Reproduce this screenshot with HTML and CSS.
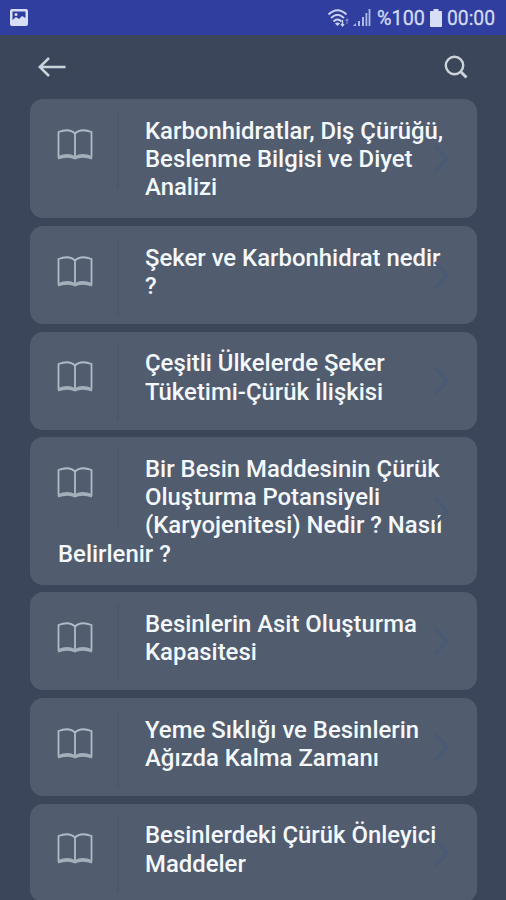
FILE: index.html
```html
<!DOCTYPE html>
<html lang="tr">
<head>
<meta charset="utf-8">
<title>Konular</title>
<link rel="stylesheet" href="styles.css">
</head>
<body>
<svg class="defs" width="0" height="0">
  <symbol id="book" viewBox="0 0 36 33">
    <path d="M18 5.500C14 1.500 8 1.500 1.500 4V30M18 5.500C22 1.500 28 1.500 34.500 4V30M18 5.500V29" fill="none" stroke="#b0bac6" stroke-width="1.800"/>
    <path d="M1 28Q11 24 18 28Q25 24 35 28V31.500Q25 28 18 31.500Q11 28 1 31.500Z" fill="#a3aebb"/>
  </symbol>
  <symbol id="chevron" viewBox="0 0 18 30">
    <path d="M3 2L15.500 15L3 28" fill="none" stroke="#495a75" stroke-width="3"/>
  </symbol>
</svg>
<header class="status">
  <svg class="picture" width="18" height="17" viewBox="0 0 18 17"><path fill-rule="evenodd" fill="#d8def8" d="M2 0H16Q18 0 18 2V15Q18 17 16 17H2Q0 17 0 15V2Q0 0 2 0ZM2.500 2.500V11L6 8L9 10L12 7L15.500 9V2.500Z"/><circle cx="6" cy="5.500" r="1.500" fill="#d8def8"/></svg>
  <div class="status-right">
    <svg class="wifi" width="23" height="18" viewBox="0 0 23 18" fill="none" stroke="#cbd3f5" stroke-width="1.900"><path d="M0.500 5.500Q9.500 -3 18.500 5.500M3 9Q9.500 2.500 16 9M5.500 12.500Q9.500 8.500 13.500 12.500"/><path d="M7 14.500Q9.500 12.500 12 14.500L9.500 17Z" fill="#cbd3f5" stroke="none"/><path d="M14.500 11V17M13 15L14.500 17L16 15" stroke-width="1.300"/><path d="M19 10V15M17.500 11.500L19 10L20.500 11.500" stroke="#7782cb" stroke-width="1.200"/></svg>
    <svg class="signal" width="18" height="18" viewBox="0 0 18 18" fill="#aeb9eb"><path d="M0 17L3 14V17ZM5 12H7V17H5ZM9 8H11V17H9ZM12.500 4H14.300V17H12.500ZM15.600 0H17.400V17H15.600Z"/></svg>
    <svg class="percent-box" width="53" height="24"><text x="0" y="19" textLength="48" lengthAdjust="spacingAndGlyphs">%100</text></svg>
    <svg class="battery" width="12" height="18" viewBox="0 0 12 18"><path fill="#d8def8" d="M3.500 0H8.500V2H11Q12 2 12 3V17Q12 18 11 18H1Q0 18 0 17V3Q0 2 1 2H3.500Z"/></svg>
    <svg class="clock" width="49" height="24"><text x="0" y="19" textLength="48" lengthAdjust="spacingAndGlyphs">00:00</text></svg>
  </div>
</header>
<nav class="toolbar">
  <svg width="28" height="20" viewBox="0 0 28 20" fill="none" stroke="#ccd5dc" stroke-width="2.500"><path d="M11 1L1.800 10L11 19M2 10H27.500"/></svg>
  <svg width="24" height="24" viewBox="0 0 24 24" fill="none" stroke="#ccd3da" stroke-width="2.400"><circle cx="10.500" cy="10.500" r="8.700"/><path d="M16.500 16.500L22.500 22.500" stroke-width="3"/></svg>
</nav>
<main class="list">
  <article class="card"><div class="media"><svg class="book"><use href="#book"/></svg></div><h2 class="title">Karbonhidratlar, Diş Çürüğü,<br>Beslenme Bilgisi ve Diyet<br>Analizi</h2><svg class="chevron"><use href="#chevron"/></svg></article>
  <article class="card"><div class="media"><svg class="book"><use href="#book"/></svg></div><h2 class="title">Şeker ve Karbonhidrat nedir<br>?</h2><svg class="chevron"><use href="#chevron"/></svg></article>
  <article class="card"><div class="media"><svg class="book"><use href="#book"/></svg></div><h2 class="title">Çeşitli Ülkelerde Şeker<br>Tüketimi-Çürük İlişkisi</h2><svg class="chevron"><use href="#chevron"/></svg></article>
  <article class="card"><div class="media"><svg class="book"><use href="#book"/></svg></div><h2 class="title">Bir Besin Maddesinin Çürük<br>Oluşturma Potansiyeli<br>(Karyojenitesi) Nedir ? Nasıl<br>Belirlenir ?</h2><svg class="chevron"><use href="#chevron"/></svg></article>
  <article class="card"><div class="media"><svg class="book"><use href="#book"/></svg></div><h2 class="title">Besinlerin Asit Oluşturma<br>Kapasitesi</h2><svg class="chevron"><use href="#chevron"/></svg></article>
  <article class="card"><div class="media"><svg class="book"><use href="#book"/></svg></div><h2 class="title">Yeme Sıklığı ve Besinlerin<br>Ağızda Kalma Zamanı</h2><svg class="chevron"><use href="#chevron"/></svg></article>
  <article class="card"><div class="media"><svg class="book"><use href="#book"/></svg></div><h2 class="title">Besinlerdeki Çürük Önleyici<br>Maddeler</h2><svg class="chevron"><use href="#chevron"/></svg></article>
</main>
</body>
</html>
```
FILE: styles.css
```css
* { box-sizing: border-box; }
body {
  margin: 0;
  height: 900px;
  overflow: hidden;
  background: #3b465a;
  font-family: Roboto, "Liberation Sans", sans-serif;
}
svg { display: block; flex: none; overflow: visible; }
.defs { position: absolute; }
.status {
  height: 35px;
  display: flex;
  align-items: center;
  justify-content: space-between;
  padding: 0 10px;
  background: #303f9f;
}
.status-right { display: flex; align-items: center; }
.status text { font-size: 20.500px; fill: #d3daf7; stroke: #d3daf7; stroke-width: 0.300px; }
.wifi { margin-right: 2px; }
.signal { margin-right: 6px; }
.battery { margin-right: 5px; }
.toolbar {
  height: 64px;
  display: flex;
  align-items: center;
  justify-content: space-between;
  padding: 0 38px;
}
.list {
  display: flex;
  flex-direction: column;
  gap: 7.600px;
  padding: 0 29px 0 30px;
}
.card {
  position: relative;
  flex: none;
  min-height: 98px;
  padding: 17.800px 28px 17.200px;
  border-radius: 13px;
  background: #515c6e;
}
.media {
  float: left;
  width: 61px;
  height: 78px;
  margin: -6px 26px -10px 0;
  border-right: 2px solid #4c596d;
}
.book { width: 36px; height: 33px; margin: 17px 0 0 -1px; }
.title {
  margin: 0;
  font-size: 23.900px;
  line-height: 28.150px;
  font-weight: 500;
  color: #f4f8ff;
  white-space: nowrap;
}
.chevron {
  position: absolute;
  right: 27px;
  top: calc(50% - 15px);
  width: 18px;
  height: 30px;
}
```
